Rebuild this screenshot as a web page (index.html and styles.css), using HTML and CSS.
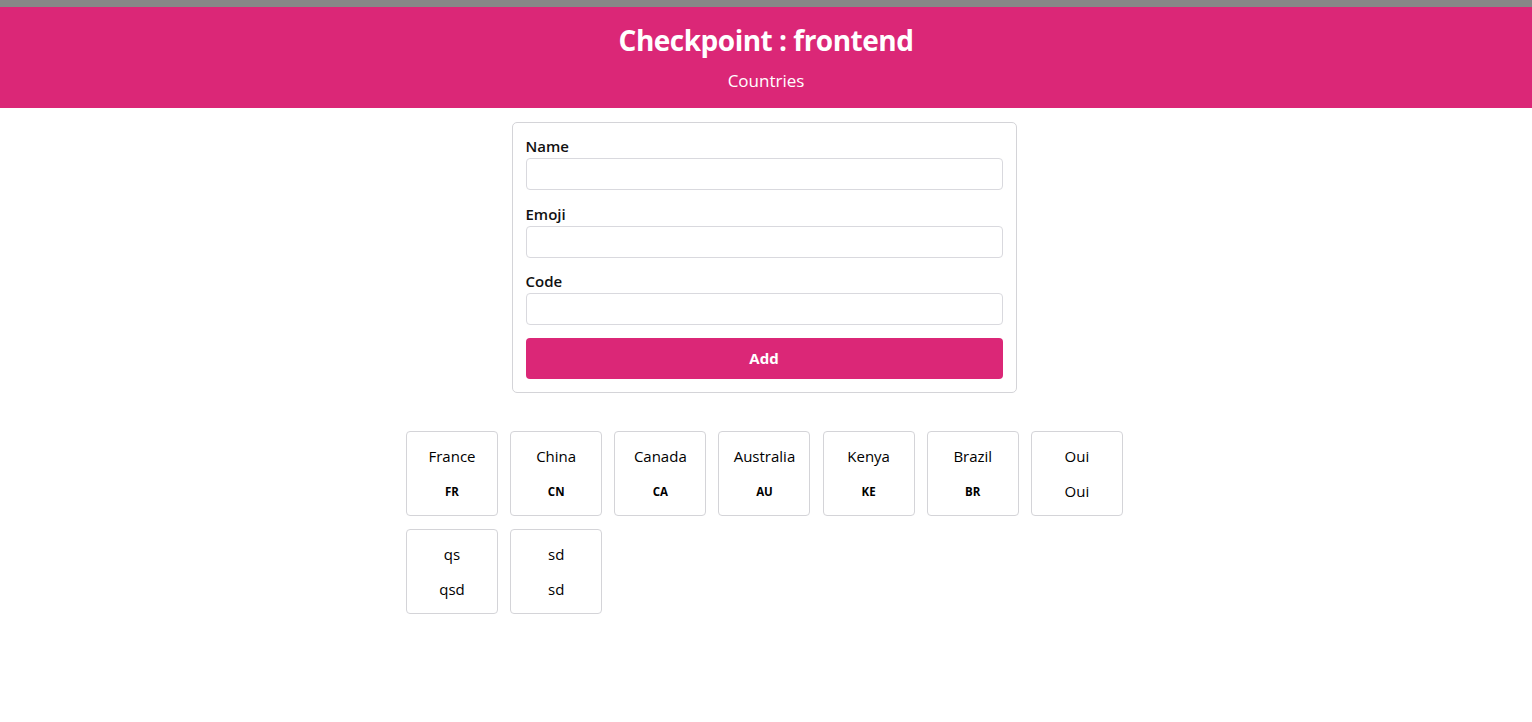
FILE: index.html
```html
<!DOCTYPE html>
<html lang="en">
<head>
<meta charset="utf-8">
<title>Checkpoint : frontend</title>
<link rel="stylesheet" href="styles.css">
</head>
<body>
<div class="topbar"></div>
<header class="header">
  <h1 class="title">Checkpoint : frontend</h1>
  <p class="subtitle">Countries</p>
</header>
<main class="main">
  <form class="form">
    <label class="field">
      <span class="label">Name</span>
      <input class="input" type="text">
    </label>
    <label class="field">
      <span class="label">Emoji</span>
      <input class="input" type="text">
    </label>
    <label class="field">
      <span class="label">Code</span>
      <input class="input" type="text">
    </label>
    <button class="btn" type="button">Add</button>
  </form>
  <div class="list">
    <div class="card"><span class="name">France</span><span class="flag">FR</span></div>
    <div class="card"><span class="name">China</span><span class="flag">CN</span></div>
    <div class="card"><span class="name">Canada</span><span class="flag">CA</span></div>
    <div class="card"><span class="name">Australia</span><span class="flag">AU</span></div>
    <div class="card"><span class="name">Kenya</span><span class="flag">KE</span></div>
    <div class="card"><span class="name">Brazil</span><span class="flag">BR</span></div>
    <div class="card"><span class="name">Oui</span><span class="emoji">Oui</span></div>
    <div class="card"><span class="name">qs</span><span class="emoji">qsd</span></div>
    <div class="card"><span class="name">sd</span><span class="emoji">sd</span></div>
  </div>
</main>
</body>
</html>
```
FILE: styles.css
```css
* { box-sizing: border-box; }
html, body { margin: 0; padding: 0; }
body {
  font-family: "Open Sans", "Noto Sans", sans-serif;
  color: #000;
  background: #fff;
}
.topbar { height: 7px; background: #878787; }
.header {
  background: #db2777;
  color: #fff;
  text-align: center;
  height: 101px;
  padding-top: 15px;
}
.title {
  margin: 0;
  font-size: 28px;
  font-weight: 700;
  line-height: 36px;
  letter-spacing: -0.5px;
}
.subtitle {
  margin: 11px 0 0;
  font-size: 17px;
  line-height: 24px;
}
.main {
  display: flex;
  flex-direction: column;
  align-items: center;
  padding: 14px 4px 0 0;
}
.form {
  width: 505px;
  border: 1px solid #d4d4d8;
  border-radius: 5px;
  padding: 12px 13px 13px;
  display: flex;
  flex-direction: column;
}
.field { display: flex; flex-direction: column; margin-bottom: 12.5px; }
.label {
  font-size: 15px;
  font-weight: 600;
  line-height: 23px;
  color: #111;
}
.input {
  height: 32px;
  border: 1px solid #d9d9de;
  border-radius: 4px;
  font: inherit;
  padding: 0 8px;
}
.btn {
  margin-top: 0;
  height: 41px;
  border: 0;
  border-radius: 4px;
  background: #db2777;
  color: #fff;
  font-family: inherit;
  font-size: 15px;
  font-weight: 700;
}
.list {
  margin: 38px 0 0 2px;
  width: 718px;
  display: flex;
  flex-wrap: wrap;
  column-gap: 12.17px;
  row-gap: 13px;
}
.card {
  width: 92px;
  height: 85px;
  border: 1px solid #d4d4d8;
  border-radius: 4px;
  display: flex;
  flex-direction: column;
  align-items: center;
  padding-top: 13px;
}
.name { font-size: 15px; line-height: 22px; font-weight: 500; }
.flag { font-size: 11.5px; font-weight: 700; margin-top: 17px; line-height: 16px; }
.emoji { font-size: 15px; line-height: 22px; margin-top: 13px; font-weight: 500; }
```
